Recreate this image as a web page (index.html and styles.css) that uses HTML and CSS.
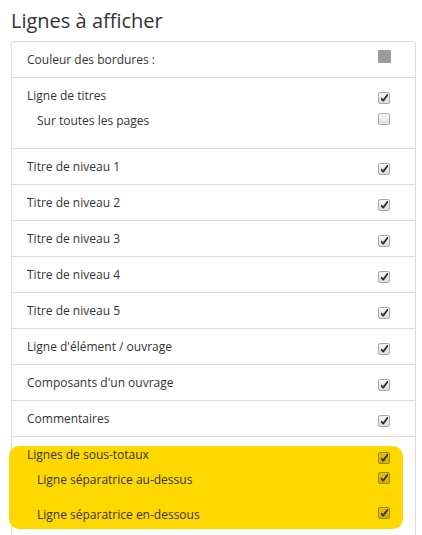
FILE: index.html
```html
<!DOCTYPE html>
<html lang="fr">
<head>
<meta charset="utf-8">
<title>Lignes à afficher</title>
<link rel="stylesheet" href="styles.css">
</head>
<body>
<div class="page">
  <h2 class="title">Lignes à afficher</h2>
  <div class="card">
    <div class="row row-first">
      <div class="line">
        <span class="label">Couleur des bordures :</span>
        <span class="swatch"></span>
      </div>
    </div>
    <div class="row row-double">
      <div class="line">
        <span class="label">Ligne de titres</span>
        <span class="cb checked"></span>
      </div>
      <div class="line sub">
        <span class="label">Sur toutes les pages</span>
        <span class="cb cb-up"></span>
      </div>
    </div>
    <div class="row"><div class="line"><span class="label">Titre de niveau 1</span><span class="cb checked"></span></div></div>
    <div class="row"><div class="line"><span class="label">Titre de niveau 2</span><span class="cb checked"></span></div></div>
    <div class="row"><div class="line"><span class="label">Titre de niveau 3</span><span class="cb checked"></span></div></div>
    <div class="row"><div class="line"><span class="label">Titre de niveau 4</span><span class="cb checked"></span></div></div>
    <div class="row"><div class="line"><span class="label">Titre de niveau 5</span><span class="cb checked"></span></div></div>
    <div class="row"><div class="line"><span class="label">Ligne d'élément / ouvrage</span><span class="cb checked"></span></div></div>
    <div class="row"><div class="line"><span class="label">Composants d'un ouvrage</span><span class="cb checked"></span></div></div>
    <div class="row"><div class="line"><span class="label">Commentaires</span><span class="cb checked"></span></div></div>
    <div class="row row-last">
      <div class="highlight">
        <div class="hl-line hl-first">
          <span class="label">Lignes de sous-totaux</span>
          <span class="cb checked hl-cb hl-cb-first"></span>
        </div>
        <div class="hl-line sub">
          <span class="label">Ligne séparatrice au-dessus</span>
          <span class="cb checked hl-cb"></span>
        </div>
        <div class="hl-line sub">
          <span class="label">Ligne séparatrice en-dessous</span>
          <span class="cb checked hl-cb"></span>
        </div>
      </div>
    </div>
  </div>
</div>
</body>
</html>
```

FILE: styles.css
```css
html, body {
  margin: 0;
  padding: 0;
  background: #ffffff;
}

body {
  font-family: "Open Sans", "DejaVu Sans", sans-serif;
  color: #333333;
  overflow: hidden;
}

.page {
  padding: 0 6px 0 11px;
}

.title {
  margin: 0;
  padding-top: 7px;
  height: 34px;
  font-size: 20px;
  font-weight: 400;
  line-height: 28px;
  color: #333333;
}

.card {
  border: 1px solid #dcdcdc;
  border-bottom: none;
  border-radius: 4px 4px 0 0;
  height: 493px;
}

.row {
  border-bottom: 1px solid #dcdcdc;
  padding: 9px 24px 8px 15px;
}

.row-first {
  padding-top: 9px;
}

.row-double {
  padding-bottom: 18px;
  display: flex;
  flex-direction: column;
  gap: 7px;
}

.row-last {
  border-bottom: none;
  padding: 9px 0 0 0;
}

.line {
  display: flex;
  justify-content: space-between;
  align-items: flex-start;
  height: 18px;
}

.label {
  font-size: 12px;
  line-height: 18px;
  white-space: nowrap;
}

.sub .label {
  padding-left: 10px;
}

.swatch {
  width: 13px;
  height: 13px;
  margin-top: -1px;
  background: #9a9a9a;
  border-radius: 1px;
}

.cb {
  position: relative;
  box-sizing: border-box;
  width: 12px;
  height: 12px;
  margin-top: 5px;
  margin-right: 1px;
  border: 1px solid #a9a9a9;
  border-radius: 2px;
  background: linear-gradient(#f6f6f6, #dedede);
}

.cb-up {
  margin-top: 1px;
}

.cb.checked::after {
  content: "";
  position: absolute;
  left: 2px;
  top: 1px;
  width: 7px;
  height: 8px;
  background: url("data:image/svg+xml,%3Csvg xmlns='http://www.w3.org/2000/svg' viewBox='0 0 7 8'%3E%3Cpath d='M0.3 4.6 L2.2 6.6 L6.6 0.8' fill='none' stroke='%23333' stroke-width='1.9' stroke-linecap='round' stroke-linejoin='round'/%3E%3C/svg%3E") no-repeat center / 7px 8px;
}

.highlight {
  margin-left: -3px;
  width: 394px;
  height: 83px;
  box-sizing: border-box;
  background: #ffd800;
  border-radius: 10px;
  padding: 0 12px 0 18px;
}

.hl-line {
  display: flex;
  justify-content: space-between;
  align-items: flex-start;
  height: 18px;
}

.hl-first {
  height: 18px;
}

.hl-line.sub {
  height: 22px;
  margin-top: 5px;
}

.hl-line.sub + .hl-line.sub {
  margin-top: 13px;
}

.hl-line.sub .label {
  line-height: 22px;
}

.hl-cb {
  border-color: #9b8500;
  background: linear-gradient(#e6c400, #cfb000);
  margin-top: 3px;
}

.hl-line.sub .hl-cb {
  margin-top: 3px;
}

.hl-cb-first {
  margin-top: 6px;
}
```
